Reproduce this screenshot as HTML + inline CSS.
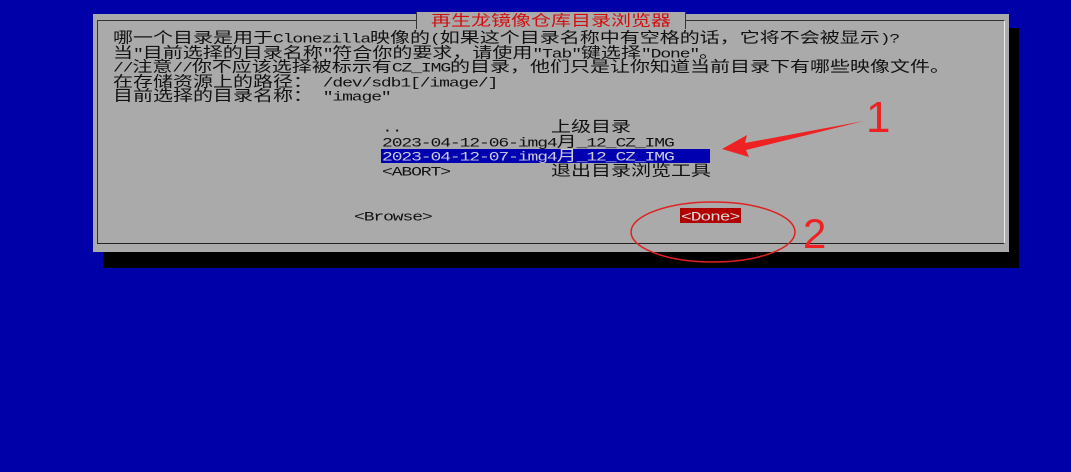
<!DOCTYPE html>
<html><head><meta charset="utf-8"><style>
body{margin:0;width:1071px;height:472px;background:#0000a8;position:relative;overflow:hidden;}
.sh{position:absolute;left:103px;top:28px;width:916px;height:240px;background:#000;}
.dlg{position:absolute;left:93px;top:14px;width:916px;height:238px;background:#aaaaaa;}
.in{position:absolute;left:97px;top:20px;width:906px;height:222px;border:1.5px solid #333;border-right-color:#eee;border-bottom-color:#222;}
.title{position:absolute;left:416px;top:12px;width:268px;height:17px;background:#aaaaaa;border-left:1.5px solid #333;border-right:1.5px solid #333;}
.t{position:absolute;white-space:pre;font-size:20px;line-height:20px;height:20px;color:#111;transform:scaleY(0.74);transform-origin:0 0;font-family:"Noto Sans CJK SC","WenQuanYi Zen Hei",sans-serif;}
.m{font-family:"Liberation Mono",monospace;font-size:18px;letter-spacing:-1.1px;}
.sel{position:absolute;left:381px;top:149px;width:329px;height:14px;background:#0000b0;}
.done{position:absolute;left:680px;top:208px;width:61px;height:15px;background:#b00000;}
.w{color:#ccd;}
</style></head><body>
<div class="sh"></div>
<div class="dlg"></div>
<div class="in"></div>
<div class="title"></div>
<div class="t" style="left:431px;top:12px;color:#d01010">再生龙镜像仓库目录浏览器</div>
<div class="t" style="left:113px;top:29px">哪一个目录是用于<span class="m">Clonezilla</span>映像的<span class="m">(</span>如果这个目录名称中有空格的话，它将不会被显示<span class="m">)?</span></div>
<div class="t" style="left:113px;top:43.5px">当<span class="m">"</span>目前选择的目录名称<span class="m">"</span>符合你的要求，请使用<span class="m">"Tab"</span>键选择<span class="m">"Done"</span>。</div>
<div class="t" style="left:113px;top:58px"><span class="m">//</span>注意<span class="m">//</span>你不应该选择被标示有<span class="m">CZ_IMG</span>的目录，他们只是让你知道当前目录下有哪些映像文件。</div>
<div class="t" style="left:113px;top:72.5px">在存储资源上的路径：<span class="m"> /dev/sdb1[/image/]</span></div>
<div class="t" style="left:113px;top:87px">目前选择的目录名称：<span class="m"> "image"</span></div>
<div class="sel"></div>
<div class="t" style="left:382px;top:118px"><span class="m">..</span></div>
<div class="t" style="left:551px;top:118px">上级目录</div>
<div class="t" style="left:382px;top:132.5px"><span class="m">2023-04-12-06-img4</span>月<span class="m">_12_CZ_IMG</span></div>
<div class="t w" style="left:382px;top:147px"><span class="m">2023-04-12-07-img4</span>月<span class="m">_12_CZ_IMG</span></div>
<div class="t" style="left:382px;top:162px"><span class="m">&lt;ABORT&gt;</span></div>
<div class="t" style="left:551px;top:162px">退出目录浏览工具</div>
<div class="done"></div>
<div class="t" style="left:354px;top:207px"><span class="m">&lt;Browse&gt;</span></div>
<div class="t" style="left:681px;top:207px;color:#ddd"><span class="m">&lt;Done&gt;</span></div>
<svg style="position:absolute;left:0;top:0" width="1071" height="472">
<ellipse cx="713" cy="232" rx="82" ry="30" fill="none" stroke="#e02020" stroke-width="1.5"/>
<path d="M864 121 L745 143 L747 135 L722 149 L749 157 L746 150 Z" fill="#ee2222"/>
<text x="866" y="132" font-family="Liberation Sans" font-size="44" fill="#ee2222">1</text>
<text x="803" y="248" font-family="Liberation Sans" font-size="42" fill="#ee2222">2</text>
</svg>
</body></html>
